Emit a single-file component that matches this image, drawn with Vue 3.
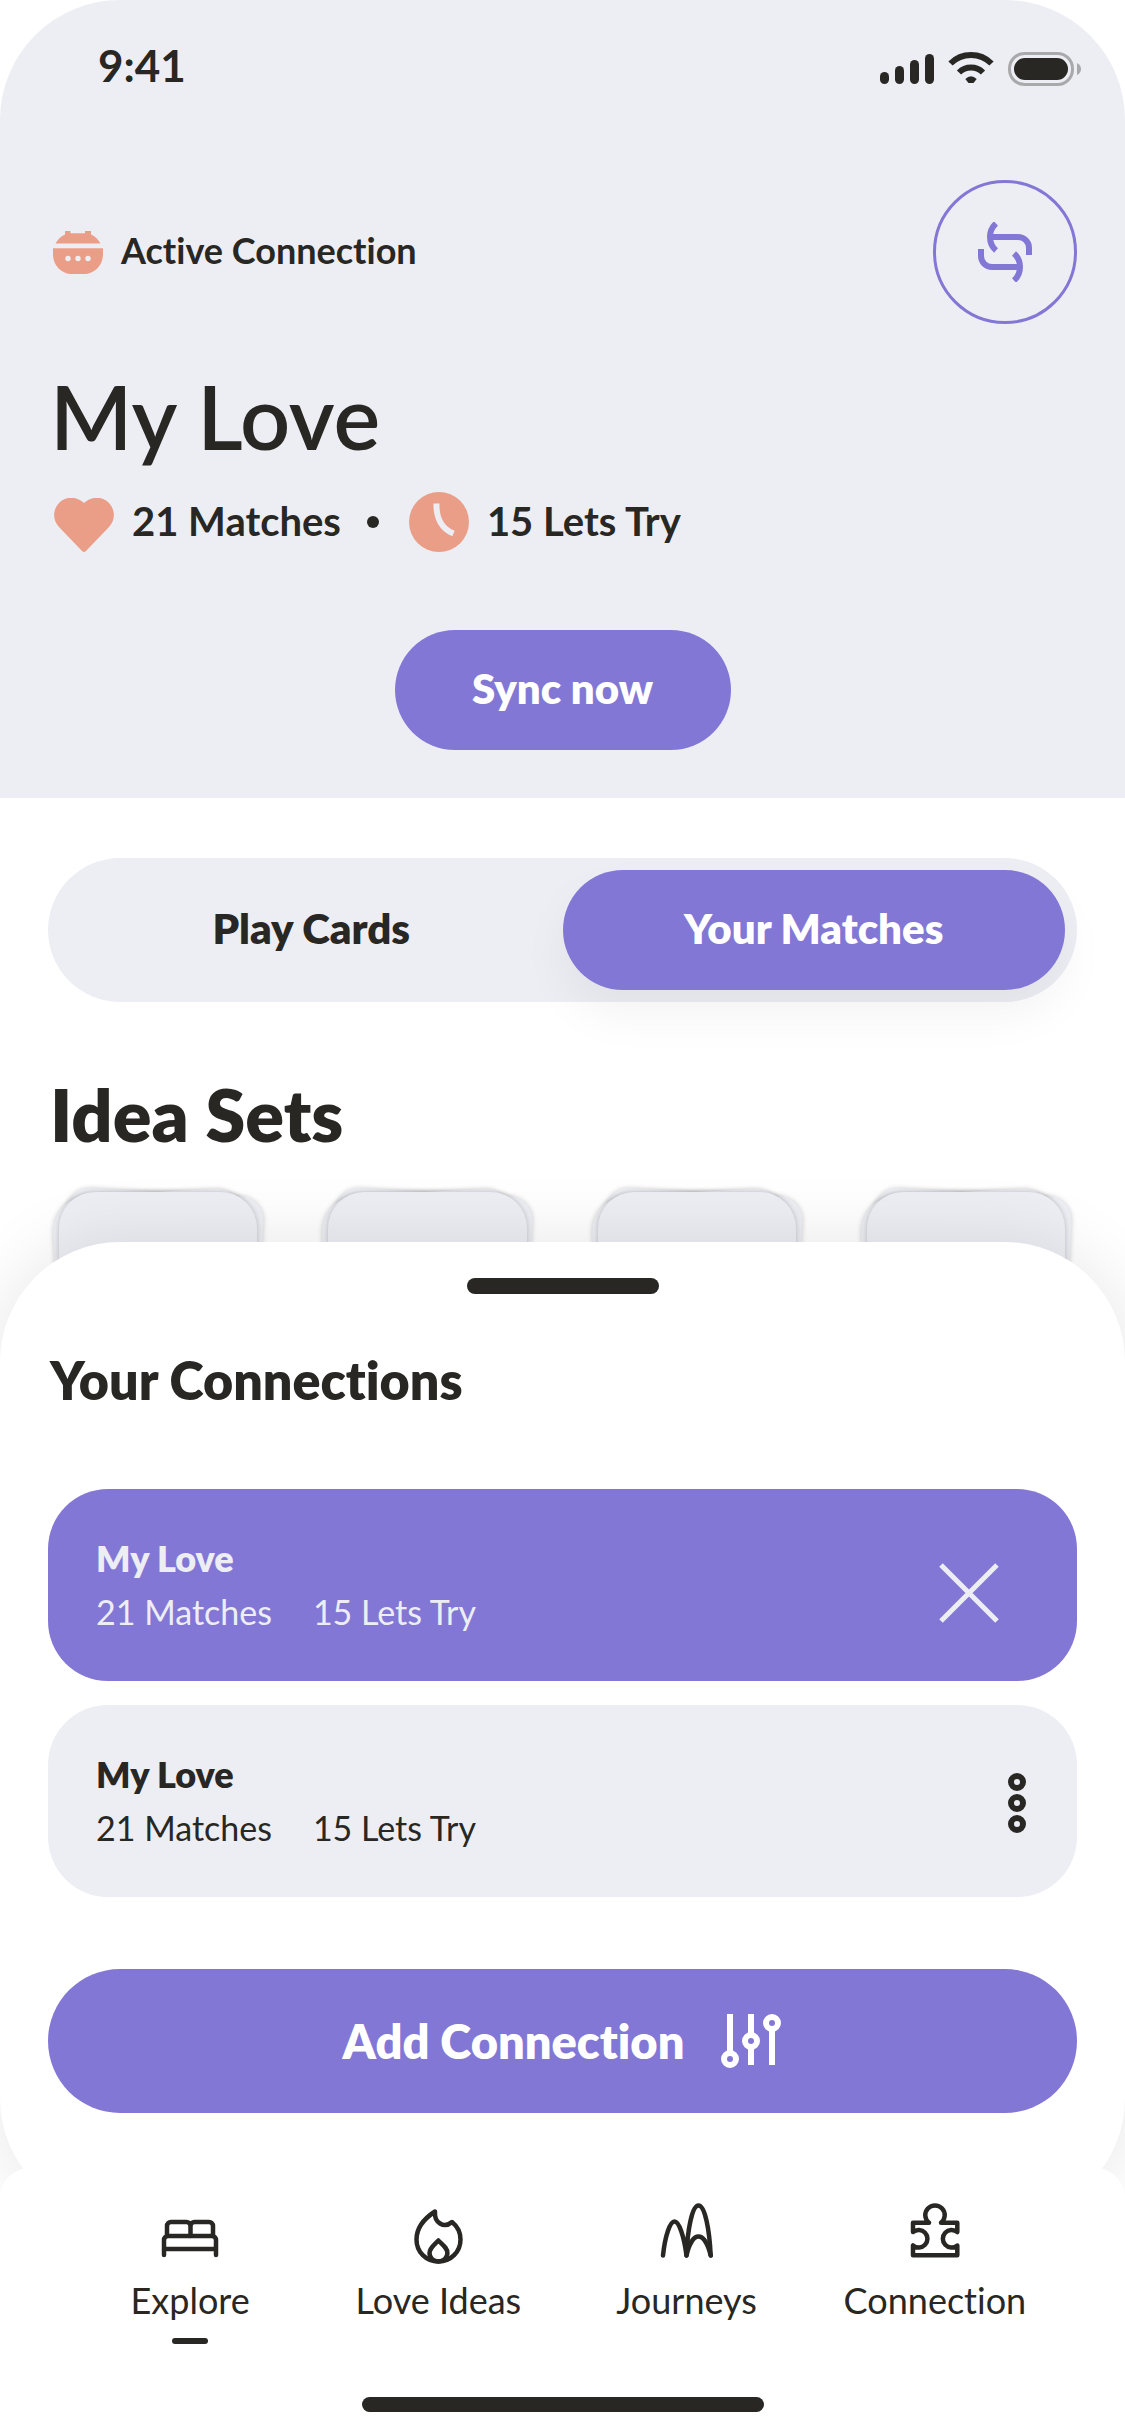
<script setup>
import { ref } from 'vue'

const tabs = ['Play Cards', 'Your Matches']
const activeTab = ref('Your Matches')

const ideaSets = [1, 2, 3, 4]

const connections = ref([
  { id: 1, name: 'My Love', matches: 21, tries: 15, selected: true },
  { id: 2, name: 'My Love', matches: 21, tries: 15, selected: false },
])

const navItems = [
  {
    label: 'Explore',
    paths: [
      'M4 55V40a4 4 0 0 1 4-4H52a4 4 0 0 1 4 4V55M4 49H56',
      'M7 36V26a4 4 0 0 1 4-4H26.5a4 4 0 0 1 4 4V36M30.5 26a4 4 0 0 1 4-4H49a4 4 0 0 1 4 4V36',
    ],
  },
  {
    label: 'Love Ideas',
    paths: [
      'M27 11.5C17 18 8.5 28 8.5 39.5C8.5 52 18 61.5 30.4 61.5S52.5 52 52.5 39.5C52.5 32 49 26 44 22C40 25.5 36 26 32 23.5C28 21 26.5 17 27 11.5Z',
      'M30.4 40.5C26 45 21.5 48 21.5 53C21.5 58 25.5 61.5 30.4 61.5S39.4 58 39.4 53C39.4 48 35 45 30.4 40.5Z',
    ],
  },
  {
    label: 'Journeys',
    paths: [
      'M6 55.5C8 36 13 21.5 17.5 21.5S27 36 29.5 55.5C30.5 30 35 5.5 41.5 5.5S52.5 30 53.7 55.5',
      'M29.5 55.5C32 44 36.5 36.5 41.5 36.5S51 44 53.7 55.5',
    ],
  },
  {
    label: 'Connection',
    paths: [
      'M24 22.7H8V32A8.8 8.8 0 1 1 8 45.5V55.3H52.3V45.5A8.8 8.8 0 1 1 52.3 32V22.7H36A9.7 9.7 0 1 0 24 22.7',
    ],
  },
]
const activeNav = ref('Explore')
</script>

<template>
  <div class="screen">
    <header class="hero">
      <div class="status">
        <span class="time">9:41</span>
        <div class="indicators">
          <svg width="54" height="30" viewBox="0 0 54 30" aria-hidden="true">
            <rect x="0" y="18" width="9" height="12" rx="4.5" />
            <rect x="15" y="12" width="9" height="18" rx="4.5" />
            <rect x="30" y="6" width="9" height="24" rx="4.5" />
            <rect x="45" y="0" width="9" height="30" rx="4.5" />
          </svg>
          <svg class="wifi" width="46" height="34" viewBox="0 0 46 34" aria-hidden="true">
            <path class="line" d="M2.500 11.500A29 29 0 0 1 43.500 11.500M11 20.500A17 17 0 0 1 35 20.500" />
            <path d="M17.300 27Q23 21.500 28.700 27L25.500 31H20.500Z" />
          </svg>
          <svg width="73" height="34" viewBox="0 0 73 34" aria-hidden="true">
            <rect class="shell" x="1.500" y="1.500" width="63" height="31" rx="15" />
            <rect x="6" y="6" width="54" height="22" rx="11" />
            <path class="cap" d="M69 11Q73 13 73 17T69 23Z" />
          </svg>
        </div>
      </div>

      <div class="active-row">
        <p class="active-label">
          <svg width="50" height="43" viewBox="0 0 50 43" aria-hidden="true">
            <path class="coral" d="M2.500 12.500C5 8 8 5 12 3.500V0H17.500V2.300H32V0H38V3.500C42 5 45 8 47.500 12.500ZM0 17.300H50V23C50 35 41 43 31 43H19C9 43 0 35 0 23Z" />
            <circle class="paper" cx="15" cy="27.500" r="2.700" />
            <circle class="paper" cx="25" cy="27.500" r="2.700" />
            <circle class="paper" cx="35" cy="27.500" r="2.700" />
          </svg>
          <span>Active Connection</span>
        </p>
        <button class="swap" type="button" aria-label="Switch connection">
          <svg width="60" height="60" viewBox="0 0 60 60" aria-hidden="true">
            <path d="M21 1.500C17 5 15 10 15 15S17 25 21 28.500M15 15H43a11 11 0 0 1 11 11V33" />
            <path d="M39 31.500C43 35 45 40 45 45S43 55 39 58.500M45 45H17A11 11 0 0 1 6 34V27" />
          </svg>
        </button>
      </div>

      <h1>My Love</h1>
      <div class="stats">
        <svg class="heart" width="60" height="54" viewBox="0 0 60 54" aria-hidden="true">
          <path class="coral" d="M30 5C37-2 49-2 55 5C61.500 12 61.500 22 55 29L32 53Q30 55 28 53L5 29C-1.500 22-1.500 12 5 5C11-2 23-2 30 5Z" />
        </svg>
        <span>21 Matches</span>
        <i class="dot"></i>
        <svg width="60" height="60" viewBox="0 0 60 60" aria-hidden="true">
          <circle class="coral" cx="30" cy="30" r="30" />
          <path class="hand" d="M27.500 11.500C27 26 33 37 44.500 41.500" />
        </svg>
        <span>15 Lets Try</span>
      </div>
      <button class="sync" type="button">Sync now</button>
    </header>

    <main class="content">
      <div class="tabs" role="tablist">
        <button
          v-for="tab in tabs"
          :key="tab"
          type="button"
          role="tab"
          class="tab"
          :class="{ on: tab === activeTab }"
          :aria-selected="tab === activeTab"
          @click="activeTab = tab"
        >{{ tab }}</button>
      </div>
      <h2>Idea Sets</h2>
      <div class="sets">
        <div v-for="set in ideaSets" :key="set" class="set">
          <div class="right"></div>
          <div class="left"></div>
          <div class="front"></div>
        </div>
      </div>
    </main>

    <section class="sheet">
      <div class="handle"></div>
      <h3>Your Connections</h3>
      <ul class="connections">
        <li v-for="c in connections" :key="c.id" class="connection" :class="{ selected: c.selected }">
          <div>
            <p class="name">{{ c.name }}</p>
            <p class="counts">
              <span>{{ c.matches }} Matches</span>
              <span>{{ c.tries }} Lets Try</span>
            </p>
          </div>
          <button v-if="c.selected" class="icon-button close" type="button" aria-label="Close">
            <svg width="60" height="60" viewBox="0 0 60 60" aria-hidden="true">
              <path d="M2 2L58 58M58 2L2 58" />
            </svg>
          </button>
          <button v-else class="icon-button more" type="button" aria-label="More options">
            <svg width="24" height="60" viewBox="0 0 24 60" aria-hidden="true">
              <circle cx="12" cy="9" r="6" />
              <circle cx="12" cy="30" r="6" />
              <circle cx="12" cy="51" r="6" />
            </svg>
          </button>
        </li>
      </ul>
      <button class="add" type="button">
        Add Connection
        <svg width="62" height="58" viewBox="0 0 62 58" aria-hidden="true">
          <path d="M10 2V41M31 2V23M31 35V53M52 17V53" />
          <circle cx="10" cy="47" r="6" />
          <circle cx="31" cy="29" r="6" />
          <circle cx="52" cy="11" r="6" />
        </svg>
      </button>
    </section>

    <footer class="bottom">
      <nav class="nav">
        <a
          v-for="item in navItems"
          :key="item.label"
          href="#"
          :class="{ current: item.label === activeNav }"
          @click.prevent="activeNav = item.label"
        >
          <svg width="60" height="66" viewBox="0 0 60 66" aria-hidden="true">
            <path v-for="d in item.paths" :key="d" :d="d" />
          </svg>
          <span>{{ item.label }}</span>
        </a>
      </nav>
      <div class="home"></div>
    </footer>
  </div>
</template>

<style>
body {
  margin: 0;
  background: #fff;
}
</style>

<style scoped>
.screen {
  --ink: #282723;
  --mist: #edeef4;
  --violet: #8377d6;
  --coral: #eb9e87;
  display: flex;
  flex-direction: column;
  min-height: 100vh;
  overflow: hidden;
  color: var(--ink);
  background: #fff;
  font-family: Lato, "Liberation Sans", sans-serif;
  font-variant-ligatures: none;
}
h1, h2, h3, p, ul {
  margin: 0;
  padding: 0;
}
h1, h2, h3 {
  padding-left: 2px;
}
button {
  padding: 0;
  border: 0;
  background: none;
  color: inherit;
  font: inherit;
  font-variant-ligatures: none;
  cursor: pointer;
}
svg {
  flex: none;
  display: block;
}
.coral {
  fill: var(--coral);
}
.paper {
  fill: var(--mist);
}

.hero {
  display: flex;
  flex-direction: column;
  padding: 38px 48px 48px;
  border-radius: 120px 120px 0 0;
  background: var(--mist);
}
.status {
  display: flex;
  justify-content: space-between;
  align-items: flex-start;
  padding-left: 50px;
}
.time {
  font-size: 44px;
  font-weight: 700;
  line-height: 54px;
}
.indicators {
  display: flex;
  align-items: center;
  gap: 14px;
  height: 62px;
  margin-right: -4px;
  fill: var(--ink);
}
.wifi .line {
  fill: none;
  stroke: var(--ink);
  stroke-width: 6;
}
.shell {
  fill: none;
  stroke: #a9a9ab;
  stroke-width: 3;
}
.cap {
  fill: #a9a9ab;
}
.active-row {
  display: flex;
  justify-content: space-between;
  align-items: center;
  margin-top: 80px;
}
.active-label {
  display: flex;
  align-items: center;
  gap: 18px;
  padding-left: 5px;
  font-size: 36px;
  font-weight: 700;
  line-height: 44px;
}
.active-label span {
  padding-bottom: 4px;
}
.swap {
  display: flex;
  align-items: center;
  justify-content: center;
  box-sizing: border-box;
  width: 144px;
  height: 144px;
  border: 3px solid var(--violet);
  border-radius: 50%;
}
.swap path {
  fill: none;
  stroke: var(--violet);
  stroke-width: 6;
}
h1 {
  margin-top: 38px;
  font-size: 88px;
  font-weight: 600;
  line-height: 108px;
}
.stats {
  display: flex;
  align-items: center;
  gap: 18px;
  margin-top: 22px;
  padding-left: 6px;
  font-size: 40px;
  font-weight: 700;
  line-height: 56px;
}
.stats span {
  padding-bottom: 2px;
}
.heart {
  margin-top: 6px;
}
.dot {
  width: 12px;
  height: 12px;
  margin: 0 12px 0 8px;
  border-radius: 50%;
  background: var(--ink);
}
.hand {
  fill: none;
  stroke: var(--mist);
  stroke-width: 6;
}
.sync {
  align-self: center;
  width: 336px;
  height: 120px;
  margin-top: 78px;
  padding-bottom: 4px;
  border-radius: 60px;
  background: var(--violet);
  color: #fff;
  font-size: 42px;
  font-weight: 800;
}

.content {
  padding: 60px 48px 0;
}
.tabs {
  display: flex;
  padding: 12px;
  border-radius: 72px;
  background: var(--mist);
}
.tab {
  flex: 1;
  height: 120px;
  padding-bottom: 4px;
  border-radius: 60px;
  font-size: 42px;
  font-weight: 800;
}
.tab.on {
  background: var(--violet);
  box-shadow: 0 24px 48px rgba(0, 0, 0, 0.05);
  color: #fff;
}
h2 {
  margin-top: 68px;
  font-size: 72px;
  font-weight: 800;
  line-height: 88px;
}
.sets {
  display: grid;
  grid-template-columns: repeat(4, 1fr);
  gap: 71px;
  margin-top: 34px;
  padding: 0 12px 0 11px;
}
.set {
  display: grid;
  height: 300px;
}
.set > div {
  grid-area: 1 / 1;
  border-radius: 36px;
  background: var(--mist);
  box-shadow: 0 0 5px rgba(0, 0, 0, 0.2);
}
.set .right {
  border-radius: 24px;
  transform: rotate(3deg);
}
.set .left {
  transform: rotate(-3deg);
}
.set .front {
  z-index: 1;
}

.sheet {
  position: relative;
  z-index: 2;
  display: flex;
  flex-direction: column;
  margin-top: -250px;
  padding: 36px 48px 105px;
  border-radius: 120px;
  background: #fff;
  box-shadow: 0 0 72px rgba(0, 0, 0, 0.1);
}
.handle {
  align-self: center;
  width: 192px;
  height: 16px;
  border-radius: 8px;
  background: var(--ink);
}
h3 {
  margin-top: 54px;
  font-size: 52px;
  font-weight: 800;
  line-height: 64px;
}
.connections {
  display: flex;
  flex-direction: column;
  gap: 24px;
  margin-top: 77px;
  list-style: none;
}
.connection {
  display: flex;
  justify-content: space-between;
  align-items: center;
  padding: 42px 48px;
  border-radius: 60px;
  background: var(--mist);
  font-size: 34px;
  line-height: 54px;
}
.connection.selected {
  background: var(--violet);
  color: var(--mist);
}
.name {
  font-size: 36px;
  font-weight: 800;
}
.counts {
  display: flex;
  gap: 41px;
}
.icon-button svg {
  fill: none;
  stroke: currentColor;
}
.close {
  margin: 16px 30px 0 0;
  stroke-width: 5;
}
.more {
  margin-top: 4px;
  stroke-width: 6;
}
.add {
  display: flex;
  align-items: center;
  justify-content: center;
  gap: 36px;
  height: 144px;
  margin-top: 72px;
  border-radius: 72px;
  background: var(--violet);
  color: #fff;
  font-size: 47px;
  font-weight: 800;
}
.add svg {
  fill: none;
  stroke: #fff;
  stroke-width: 6;
}

.bottom {
  position: relative;
  z-index: 3;
  display: flex;
  flex: 1;
  flex-direction: column;
  justify-content: space-between;
  margin-top: -50px;
  padding: 32px 66px 24px;
  border-radius: 30px 30px 0 0;
  background: #fff;
}
.nav {
  display: grid;
  grid-template-columns: repeat(4, 1fr);
}
.nav a {
  display: flex;
  flex-direction: column;
  align-items: center;
  gap: 12px;
  color: var(--ink);
  font-size: 36px;
  line-height: 44px;
  text-decoration: none;
  white-space: nowrap;
}
.nav svg {
  fill: none;
  stroke: var(--ink);
  stroke-width: 4.5;
  stroke-linecap: round;
  stroke-linejoin: round;
}
.nav a.current::after {
  content: "";
  width: 36px;
  height: 6px;
  margin-top: 4px;
  border-radius: 3px;
  background: var(--ink);
}
.home {
  align-self: center;
  width: 402px;
  height: 15px;
  border-radius: 8px;
  background: var(--ink);
}
</style>
